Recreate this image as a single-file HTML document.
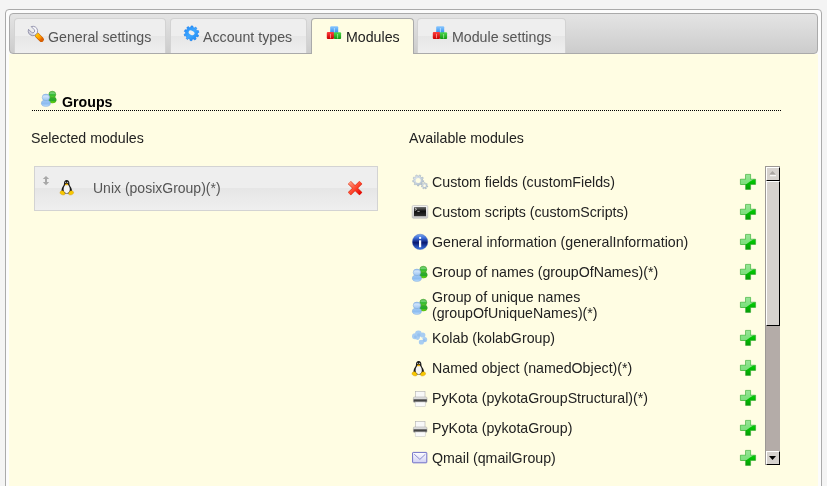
<!DOCTYPE html>
<html><head><meta charset="utf-8"><style>
*{box-sizing:border-box;margin:0;padding:0}
html,body{width:827px;height:486px;overflow:hidden;background:#f4f4f4;font-family:"Liberation Sans",sans-serif;font-size:14.2px}
.abs{position:absolute}
#outer{position:absolute;left:5px;top:9px;width:817px;height:520px;border:1px solid #aaaaaa;border-radius:4px;background:#fcfcfc}
#bar{position:absolute;left:9px;top:13px;width:809px;height:41px;border:1px solid #aaaaaa;border-radius:4px;background:linear-gradient(#e4e4e4,#cccccc)}
#content{position:absolute;left:9px;top:54px;width:809px;height:460px;background:#fffde3}
.tab{position:absolute;top:18px;height:35px;border:1px solid #d3d3d3;border-bottom:0;border-radius:4px 4px 0 0;background:linear-gradient(#eeeeee 0,#eeeeee 50%,#e6e6e6 50%,#efefef 100%)}
.tab.act{border-color:#aaaaaa;background:#fffde3;height:36px}
.t{position:absolute;line-height:16px;white-space:nowrap;will-change:transform}
.tabt{color:#555555}
.act .tabt{color:#212121}
svg.i{position:absolute;overflow:visible;width:16px;height:16px}
#sel{position:absolute;left:34px;top:166px;width:344px;height:45px;border:1px solid #d3d3d3;background:linear-gradient(#eeeeee 0,#eeeeee 50%,#e6e6e6 50%,#efefef 100%)}
.mt{color:#222222}
#sb{position:absolute;left:765px;top:166px;width:15px;height:299px;background:#b4aca8;border-left:1px solid #9c9894;border-top:1px solid #9c9894}
.btn{position:absolute;left:0;width:14px;background:#d6d2ce;border-top:1px solid #fff;border-left:1px solid #fff;border-right:1px solid #000;border-bottom:1px solid #000}
</style></head><body>

<svg width="0" height="0" style="position:absolute">
<defs>
 <linearGradient id="gOr" x1="0" y1="0" x2="1" y2="1"><stop offset="0" stop-color="#ffc000"/><stop offset="0.6" stop-color="#ff9a00"/><stop offset="1" stop-color="#e06000"/></linearGradient>
 <linearGradient id="gSil" x1="1" y1="0" x2="0" y2="1"><stop offset="0" stop-color="#ffffff"/><stop offset="0.5" stop-color="#f0f0f6"/><stop offset="1" stop-color="#b0b0c4"/></linearGradient>
 <linearGradient id="gBlue" x1="0" y1="0" x2="1" y2="1"><stop offset="0" stop-color="#1a88f8"/><stop offset="0.5" stop-color="#40a8ff"/><stop offset="1" stop-color="#1080f0"/></linearGradient>
 <linearGradient id="gCb" x1="0" y1="0" x2="0" y2="1"><stop offset="0" stop-color="#8cc8ff"/><stop offset="1" stop-color="#2a8cf0"/></linearGradient>
 <linearGradient id="gCr" x1="0" y1="0" x2="0" y2="1"><stop offset="0" stop-color="#ff4040"/><stop offset="1" stop-color="#c80000"/></linearGradient>
 <linearGradient id="gCg" x1="0" y1="0" x2="0" y2="1"><stop offset="0" stop-color="#50d850"/><stop offset="1" stop-color="#109810"/></linearGradient>
 <linearGradient id="gPg" x1="0" y1="0" x2="0" y2="1"><stop offset="0" stop-color="#38b038"/><stop offset="0.3" stop-color="#80d880"/><stop offset="0.55" stop-color="#30b830"/><stop offset="1" stop-color="#60d030"/></linearGradient>
 <linearGradient id="gPg2" x1="0" y1="0" x2="0" y2="1"><stop offset="0" stop-color="#30b030"/><stop offset="0.6" stop-color="#28a828"/><stop offset="1" stop-color="#80f000"/></linearGradient>
 <linearGradient id="gPb" x1="0" y1="0" x2="0" y2="1"><stop offset="0" stop-color="#90baf0"/><stop offset="0.3" stop-color="#d0e4fa"/><stop offset="1" stop-color="#98c2f2"/></linearGradient>
 <linearGradient id="gPb2" x1="0" y1="0" x2="0" y2="1"><stop offset="0" stop-color="#a0c8f4"/><stop offset="0.6" stop-color="#8cbcf0"/><stop offset="1" stop-color="#c0e0ff"/></linearGradient>
 <linearGradient id="gX" x1="0" y1="0" x2="1" y2="1"><stop offset="0" stop-color="#ff9a80"/><stop offset="0.5" stop-color="#ff4a30"/><stop offset="1" stop-color="#e80000"/></linearGradient>
 <linearGradient id="gPlus" x1="0" y1="0" x2="1" y2="1"><stop offset="0" stop-color="#b8ecb8"/><stop offset="0.45" stop-color="#70d070"/><stop offset="0.55" stop-color="#00c000"/><stop offset="1" stop-color="#10a010"/></linearGradient>
 <linearGradient id="gPlusB" x1="0" y1="0" x2="0" y2="1"><stop offset="0" stop-color="#30c830"/><stop offset="0.5" stop-color="#00c400"/><stop offset="1" stop-color="#089a08"/></linearGradient>
 <linearGradient id="gGear" x1="0" y1="0" x2="1" y2="1"><stop offset="0" stop-color="#e8eef6"/><stop offset="1" stop-color="#a8b8c8"/></linearGradient>
 <linearGradient id="gInfo" x1="0" y1="0" x2="0" y2="1"><stop offset="0" stop-color="#7aa8f0"/><stop offset="0.25" stop-color="#3a6ad8"/><stop offset="0.55" stop-color="#0a1a70"/><stop offset="1" stop-color="#3c78e8"/></linearGradient>
 <linearGradient id="gTerm" x1="0" y1="0" x2="0" y2="1"><stop offset="0" stop-color="#f4f4f4"/><stop offset="1" stop-color="#c8c8c8"/></linearGradient>
 <linearGradient id="gScr" x1="0" y1="0" x2="0" y2="1"><stop offset="0" stop-color="#707070"/><stop offset="0.45" stop-color="#101010"/><stop offset="1" stop-color="#303030"/></linearGradient>
 <linearGradient id="gEnv" x1="0" y1="0" x2="0" y2="1"><stop offset="0" stop-color="#ffffff"/><stop offset="1" stop-color="#d0d0f4"/></linearGradient>
 <linearGradient id="gPr" x1="0" y1="0" x2="0" y2="1"><stop offset="0" stop-color="#e8e8e8"/><stop offset="0.35" stop-color="#d8d8d8"/><stop offset="0.5" stop-color="#505050"/><stop offset="0.75" stop-color="#404040"/><stop offset="1" stop-color="#b0b0b0"/></linearGradient>

 

 

 

 

 
</defs>
</svg>

<div id="outer"></div><div id="bar"></div><div id="content"></div>
<div class="tab" style="left:14px;width:152px"><span class="t tabt" style="left:33px;top:10px">General settings</span></div>
<div class="tab" style="left:170px;width:137px"><span class="t tabt" style="left:32px;top:10px">Account types</span></div>
<div class="tab act" style="left:311px;width:103px"><span class="t tabt" style="left:34px;top:10px">Modules</span></div>
<div class="tab" style="left:417px;width:149px"><span class="t tabt" style="left:34px;top:10px">Module settings</span></div>
<svg class="i" style="left:28px;top:26px" viewBox="0 0 16 16">
 <line x1="9.2" y1="9.2" x2="13.4" y2="13.4" stroke="#c85a00" stroke-width="5" stroke-linecap="round"/>
 <line x1="9.2" y1="9.2" x2="13.4" y2="13.4" stroke="url(#gOr)" stroke-width="4" stroke-linecap="round"/>
 <path d="M3.2 0.62 L6.24 3.66 A1.9 1.9 0 0 1 3.56 6.34 L0.52 3.3 A4.7 4.7 0 1 0 3.2 0.62Z" fill="url(#gSil)" stroke="#8282a0" stroke-width="0.8" stroke-linejoin="round"/>
</svg>
<svg class="i" style="left:183px;top:25px" viewBox="0 0 16 16">
 <defs><mask id="gm"><rect x="-2" y="-2" width="20" height="20" fill="#fff"/><ellipse cx="8.6" cy="7.8" rx="3.1" ry="2.1" transform="rotate(25 8.6 7.8)" fill="#000"/></mask></defs>
 <path d="M14.38 9.49 L15.67 10.13 L14.94 11.94 L13.57 11.51 L12.56 12.72 L13.22 14.00 L11.57 15.03 L10.71 13.88 L9.18 14.26 L8.97 15.68 L7.03 15.55 L7.01 14.11 L5.55 13.52 L4.54 14.55 L3.05 13.30 L3.88 12.13 L3.04 10.79 L1.62 11.03 L1.15 9.14 L2.51 8.68 L2.62 7.11 L1.33 6.47 L2.06 4.66 L3.43 5.09 L4.44 3.88 L3.78 2.60 L5.43 1.57 L6.29 2.72 L7.82 2.34 L8.03 0.92 L9.97 1.05 L9.99 2.49 L11.45 3.08 L12.46 2.05 L13.95 3.30 L13.12 4.47 L13.96 5.81 L15.38 5.57 L15.85 7.46 L14.49 7.92Z" fill="url(#gBlue)" stroke="#1a80f0" stroke-width="0.6" stroke-linejoin="round" mask="url(#gm)"/>
</svg>
<svg class="i" style="left:325px;top:25px" viewBox="0 0 16 16">
  <rect x="5.2" y="1.2" width="8" height="7" rx="1" fill="url(#gCb)"/>
  <rect x="8.9" y="3" width="0.9" height="4.5" fill="#c8e8ff" opacity="0.8"/>
  <rect x="1.8" y="7" width="7.2" height="7" rx="1" fill="url(#gCr)"/>
  <rect x="5" y="8.8" width="0.9" height="4.5" fill="#ffb0b0" opacity="0.8"/>
  <rect x="8.9" y="7.2" width="7.2" height="6.8" rx="1" fill="url(#gCg)"/>
  <rect x="12.2" y="9" width="0.9" height="4.5" fill="#b0f0b0" opacity="0.8"/>
 </svg>
<svg class="i" style="left:431px;top:25px" viewBox="0 0 16 16">
  <rect x="5.2" y="1.2" width="8" height="7" rx="1" fill="url(#gCb)"/>
  <rect x="8.9" y="3" width="0.9" height="4.5" fill="#c8e8ff" opacity="0.8"/>
  <rect x="1.8" y="7" width="7.2" height="7" rx="1" fill="url(#gCr)"/>
  <rect x="5" y="8.8" width="0.9" height="4.5" fill="#ffb0b0" opacity="0.8"/>
  <rect x="8.9" y="7.2" width="7.2" height="6.8" rx="1" fill="url(#gCg)"/>
  <rect x="12.2" y="9" width="0.9" height="4.5" fill="#b0f0b0" opacity="0.8"/>
 </svg>
<svg class="i" style="left:40px;top:89px" viewBox="0 0 16 16">
  <g stroke="#3a9a20" stroke-width="0.5">
  <ellipse cx="12.3" cy="10.9" rx="4" ry="3.1" fill="url(#gPg2)"/>
  <ellipse cx="12.3" cy="5.4" rx="3.5" ry="3.2" fill="url(#gPg)"/>
  </g>
  <g stroke="#7aa6d8" stroke-width="0.5">
  <ellipse cx="5.9" cy="14.2" rx="4.5" ry="3.2" fill="url(#gPb2)"/>
  <ellipse cx="5.9" cy="8.4" rx="3.7" ry="3.3" fill="url(#gPb)"/>
  </g>
 </svg>
<span class="t" style="left:62px;top:94px;font-weight:bold;color:#000">Groups</span>
<div class="abs" style="left:32px;top:110px;width:749px;height:1px;border-top:1px dotted #000"></div>
<span class="t mt" style="left:31px;top:130px">Selected modules</span>
<span class="t mt" style="left:409px;top:130px">Available modules</span>
<div id="sel"></div>
<svg class="i" style="left:42px;top:175px" viewBox="0 0 16 16">
 <path d="M4 1 L7.2 4 L5 4 L5 7 L7.2 7 L4 10.2 L0.8 7 L3 7 L3 4 L0.8 4Z" fill="#a8a8a8"/>
</svg>
<svg class="i" style="left:58px;top:179px" viewBox="0 0 16 16">
  <path d="M8.7 1 C6.9 1 6 2.4 6 4.2 C6 5.6 5.6 6.4 4.8 7.6 C3.9 9 3.4 10.6 3.6 12.4 L5.4 14.6 L12 14.6 L14 12.2 C14.1 10.4 13.4 8.8 12.4 7.4 C11.6 6.2 11.4 5.4 11.4 4.2 C11.4 2.4 10.5 1 8.7 1Z" fill="#1a1a1a"/>
  <path d="M8.7 5.2 C7 5.2 5.6 7.8 5.6 10.6 C5.6 12.8 6.8 14.2 8.7 14.2 C10.6 14.2 11.8 12.8 11.8 10.6 C11.8 7.8 10.4 5.2 8.7 5.2Z" fill="#f4f4f4"/>
  <ellipse cx="8.6" cy="5.4" rx="1.5" ry="0.9" fill="#f0b000"/><circle cx="7.7" cy="3.3" r="0.6" fill="#ddd"/><circle cx="9.6" cy="3.3" r="0.6" fill="#ddd"/>
  <path d="M2 13.6 C2 12.2 3.6 11.4 4.8 11.8 C6 12.2 6.8 13.6 7 14.8 C7.2 15.8 5.6 16.2 4.2 15.8 C2.8 15.4 2 14.6 2 13.6Z" fill="#f8c800" stroke="#c89000" stroke-width="0.4"/>
  <path d="M15.6 13.6 C15.6 12.2 14 11.4 12.8 11.8 C11.6 12.2 10.6 13.6 10.6 14.8 C10.4 15.8 12 16.2 13.4 15.8 C14.8 15.4 15.6 14.6 15.6 13.6Z" fill="#f8c800" stroke="#c89000" stroke-width="0.4"/>
 </svg>
<svg class="i" style="left:347px;top:180px" viewBox="0 0 16 16">
 <path d="M2.4 2.4 L13.8 13.8 M13.8 2.4 L2.4 13.8" stroke="#d83018" stroke-width="4.2" stroke-linecap="butt"/>
 <path d="M2.4 2.4 L13.8 13.8 M13.8 2.4 L2.4 13.8" stroke="url(#gX)" stroke-width="3.2" stroke-linecap="butt"/>
</svg>
<span class="t" style="left:93px;top:180px;color:#555;font-size:14px">Unix (posixGroup)(*)</span>
<svg class="i" style="left:410px;top:173px" viewBox="0 0 16 16">
 <defs><mask id="ggm"><rect x="-2" y="-2" width="22" height="22" fill="#fff"/><circle cx="8.2" cy="7.4" r="2.5" fill="#000"/><circle cx="14.6" cy="12.8" r="1.2" fill="#000"/></mask></defs>
 <g mask="url(#ggm)">
 <path d="M12.60 7.40 L13.79 7.71 L13.53 9.13 L12.30 8.99 L11.57 10.23 L12.28 11.23 L11.17 12.15 L10.32 11.26 L8.96 11.73 L8.86 12.96 L7.42 12.95 L7.35 11.72 L6.00 11.21 L5.13 12.09 L4.04 11.15 L4.77 10.16 L4.07 8.90 L2.84 9.02 L2.60 7.60 L3.80 7.31 L4.07 5.90 L3.05 5.19 L3.79 3.95 L4.89 4.50 L6.00 3.59 L5.68 2.40 L7.04 1.92 L7.53 3.05 L8.96 3.07 L9.48 1.95 L10.83 2.46 L10.48 3.64 L11.57 4.57 L12.68 4.05 L13.39 5.30 L12.37 5.98Z" fill="url(#gGear)" stroke="#9aaabb" stroke-width="0.5"/>
 <path d="M16.90 12.80 L17.79 13.03 L17.54 14.06 L16.64 13.85 L16.03 14.60 L16.41 15.44 L15.45 15.88 L15.05 15.06 L14.09 15.04 L13.67 15.86 L12.72 15.39 L13.12 14.56 L12.53 13.80 L11.62 13.98 L11.40 12.94 L12.30 12.74 L12.53 11.80 L11.82 11.21 L12.49 10.39 L13.21 10.96 L14.09 10.56 L14.11 9.64 L15.17 9.65 L15.17 10.57 L16.03 11.00 L16.77 10.45 L17.42 11.28 L16.70 11.86Z" fill="url(#gGear)" stroke="#9aaabb" stroke-width="0.5"/>
 </g>
</svg>
<svg class="i" style="left:740px;top:174px" viewBox="0 0 16 16">
  <path d="M5.6 0.4 H10.6 V5.2 H15.6 V10.4 H10.6 V15.4 H5.6 V10.4 H0.4 V5.2 H5.6Z" fill="url(#gPlusB)" stroke="#30a830" stroke-width="0.6" stroke-linejoin="round"/>
  <path d="M5.9 0.7 H10.3 V5.5 H13.4 C11 6.6 9 8 6.6 10.1 H0.7 V5.5 H5.9Z" fill="#ffffff" opacity="0.5"/>
 </svg>
<span class="t mt" style="left:432px;top:174px">Custom fields (customFields)</span>
<svg class="i" style="left:411px;top:204px" viewBox="0 0 16 16">
 <rect x="1.2" y="1.5" width="15.6" height="12.8" rx="1.2" fill="url(#gTerm)" stroke="#b8b8b8" stroke-width="0.6"/>
 <rect x="3" y="3" width="12" height="9.2" fill="url(#gScr)"/>
 <path d="M3.8 3.8 L5.6 5.2 L3.8 6.6" stroke="#e8e8e8" stroke-width="0.8" fill="none"/>
 <path d="M6.4 7.4 H8.6" stroke="#c0c0c0" stroke-width="0.9"/>
</svg>
<svg class="i" style="left:740px;top:204px" viewBox="0 0 16 16">
  <path d="M5.6 0.4 H10.6 V5.2 H15.6 V10.4 H10.6 V15.4 H5.6 V10.4 H0.4 V5.2 H5.6Z" fill="url(#gPlusB)" stroke="#30a830" stroke-width="0.6" stroke-linejoin="round"/>
  <path d="M5.9 0.7 H10.3 V5.5 H13.4 C11 6.6 9 8 6.6 10.1 H0.7 V5.5 H5.9Z" fill="#ffffff" opacity="0.5"/>
 </svg>
<span class="t mt" style="left:432px;top:204px">Custom scripts (customScripts)</span>
<svg class="i" style="left:412px;top:234px" viewBox="0 0 16 16">
 <circle cx="8.1" cy="7.9" r="7.7" fill="url(#gInfo)" stroke="#2a50b0" stroke-width="0.4"/>
 <circle cx="8.1" cy="3.9" r="1.15" fill="#fff"/>
 <rect x="7" y="6.3" width="2.2" height="7" fill="#fff"/>
</svg>
<svg class="i" style="left:740px;top:234px" viewBox="0 0 16 16">
  <path d="M5.6 0.4 H10.6 V5.2 H15.6 V10.4 H10.6 V15.4 H5.6 V10.4 H0.4 V5.2 H5.6Z" fill="url(#gPlusB)" stroke="#30a830" stroke-width="0.6" stroke-linejoin="round"/>
  <path d="M5.9 0.7 H10.3 V5.5 H13.4 C11 6.6 9 8 6.6 10.1 H0.7 V5.5 H5.9Z" fill="#ffffff" opacity="0.5"/>
 </svg>
<span class="t mt" style="left:432px;top:234px">General information (generalInformation)</span>
<svg class="i" style="left:411px;top:264px" viewBox="0 0 16 16">
  <g stroke="#3a9a20" stroke-width="0.5">
  <ellipse cx="12.3" cy="10.9" rx="4" ry="3.1" fill="url(#gPg2)"/>
  <ellipse cx="12.3" cy="5.4" rx="3.5" ry="3.2" fill="url(#gPg)"/>
  </g>
  <g stroke="#7aa6d8" stroke-width="0.5">
  <ellipse cx="5.9" cy="14.2" rx="4.5" ry="3.2" fill="url(#gPb2)"/>
  <ellipse cx="5.9" cy="8.4" rx="3.7" ry="3.3" fill="url(#gPb)"/>
  </g>
 </svg>
<svg class="i" style="left:740px;top:264px" viewBox="0 0 16 16">
  <path d="M5.6 0.4 H10.6 V5.2 H15.6 V10.4 H10.6 V15.4 H5.6 V10.4 H0.4 V5.2 H5.6Z" fill="url(#gPlusB)" stroke="#30a830" stroke-width="0.6" stroke-linejoin="round"/>
  <path d="M5.9 0.7 H10.3 V5.5 H13.4 C11 6.6 9 8 6.6 10.1 H0.7 V5.5 H5.9Z" fill="#ffffff" opacity="0.5"/>
 </svg>
<span class="t mt" style="left:432px;top:264px">Group of names (groupOfNames)(*)</span>
<svg class="i" style="left:411px;top:297px" viewBox="0 0 16 16">
  <g stroke="#3a9a20" stroke-width="0.5">
  <ellipse cx="12.3" cy="10.9" rx="4" ry="3.1" fill="url(#gPg2)"/>
  <ellipse cx="12.3" cy="5.4" rx="3.5" ry="3.2" fill="url(#gPg)"/>
  </g>
  <g stroke="#7aa6d8" stroke-width="0.5">
  <ellipse cx="5.9" cy="14.2" rx="4.5" ry="3.2" fill="url(#gPb2)"/>
  <ellipse cx="5.9" cy="8.4" rx="3.7" ry="3.3" fill="url(#gPb)"/>
  </g>
 </svg>
<svg class="i" style="left:740px;top:297px" viewBox="0 0 16 16">
  <path d="M5.6 0.4 H10.6 V5.2 H15.6 V10.4 H10.6 V15.4 H5.6 V10.4 H0.4 V5.2 H5.6Z" fill="url(#gPlusB)" stroke="#30a830" stroke-width="0.6" stroke-linejoin="round"/>
  <path d="M5.9 0.7 H10.3 V5.5 H13.4 C11 6.6 9 8 6.6 10.1 H0.7 V5.5 H5.9Z" fill="#ffffff" opacity="0.5"/>
 </svg>
<span class="t mt" style="left:432px;top:289px">Group of unique names</span>
<span class="t mt" style="left:432px;top:305px">(groupOfUniqueNames)(*)</span>
<svg class="i" style="left:411px;top:329px" viewBox="0 0 16 16">
 <g fill="#a8cdf2">
 <circle cx="7.4" cy="4.8" r="3.4"/><circle cx="4" cy="7.2" r="3"/><circle cx="11.8" cy="6" r="2.6"/>
 <circle cx="13.6" cy="10.6" r="2.6"/><circle cx="10.4" cy="13" r="2.6"/><circle cx="6.6" cy="8.6" r="2.4"/>
 </g>
 <path d="M8.2 10.6 Q10 9.6 11.8 10.4" stroke="#fffde3" stroke-width="1.2" fill="none"/>
 <g fill="#90bdee" opacity="0.7"><circle cx="7.8" cy="6" r="1.8"/><circle cx="13.2" cy="11.4" r="1.4"/><circle cx="4.4" cy="8" r="1.4"/></g>
</svg>
<svg class="i" style="left:740px;top:330px" viewBox="0 0 16 16">
  <path d="M5.6 0.4 H10.6 V5.2 H15.6 V10.4 H10.6 V15.4 H5.6 V10.4 H0.4 V5.2 H5.6Z" fill="url(#gPlusB)" stroke="#30a830" stroke-width="0.6" stroke-linejoin="round"/>
  <path d="M5.9 0.7 H10.3 V5.5 H13.4 C11 6.6 9 8 6.6 10.1 H0.7 V5.5 H5.9Z" fill="#ffffff" opacity="0.5"/>
 </svg>
<span class="t mt" style="left:432px;top:330px">Kolab (kolabGroup)</span>
<svg class="i" style="left:410px;top:360px" viewBox="0 0 16 16">
  <path d="M8.7 1 C6.9 1 6 2.4 6 4.2 C6 5.6 5.6 6.4 4.8 7.6 C3.9 9 3.4 10.6 3.6 12.4 L5.4 14.6 L12 14.6 L14 12.2 C14.1 10.4 13.4 8.8 12.4 7.4 C11.6 6.2 11.4 5.4 11.4 4.2 C11.4 2.4 10.5 1 8.7 1Z" fill="#1a1a1a"/>
  <path d="M8.7 5.2 C7 5.2 5.6 7.8 5.6 10.6 C5.6 12.8 6.8 14.2 8.7 14.2 C10.6 14.2 11.8 12.8 11.8 10.6 C11.8 7.8 10.4 5.2 8.7 5.2Z" fill="#f4f4f4"/>
  <ellipse cx="8.6" cy="5.4" rx="1.5" ry="0.9" fill="#f0b000"/><circle cx="7.7" cy="3.3" r="0.6" fill="#ddd"/><circle cx="9.6" cy="3.3" r="0.6" fill="#ddd"/>
  <path d="M2 13.6 C2 12.2 3.6 11.4 4.8 11.8 C6 12.2 6.8 13.6 7 14.8 C7.2 15.8 5.6 16.2 4.2 15.8 C2.8 15.4 2 14.6 2 13.6Z" fill="#f8c800" stroke="#c89000" stroke-width="0.4"/>
  <path d="M15.6 13.6 C15.6 12.2 14 11.4 12.8 11.8 C11.6 12.2 10.6 13.6 10.6 14.8 C10.4 15.8 12 16.2 13.4 15.8 C14.8 15.4 15.6 14.6 15.6 13.6Z" fill="#f8c800" stroke="#c89000" stroke-width="0.4"/>
 </svg>
<svg class="i" style="left:740px;top:360px" viewBox="0 0 16 16">
  <path d="M5.6 0.4 H10.6 V5.2 H15.6 V10.4 H10.6 V15.4 H5.6 V10.4 H0.4 V5.2 H5.6Z" fill="url(#gPlusB)" stroke="#30a830" stroke-width="0.6" stroke-linejoin="round"/>
  <path d="M5.9 0.7 H10.3 V5.5 H13.4 C11 6.6 9 8 6.6 10.1 H0.7 V5.5 H5.9Z" fill="#ffffff" opacity="0.5"/>
 </svg>
<span class="t mt" style="left:432px;top:360px">Named object (namedObject)(*)</span>
<svg class="i" style="left:411px;top:390px" viewBox="0 0 16 16">
  <rect x="4.4" y="1.4" width="9.6" height="6" fill="#f8f8f8" stroke="#b0b0b0" stroke-width="0.6"/>
  <rect x="2.4" y="7" width="13.6" height="5.4" rx="1" fill="url(#gPr)" stroke="#a0a0a0" stroke-width="0.5"/>
  <rect x="4.2" y="12" width="10" height="4.4" fill="#fafafa" stroke="#c0c0c0" stroke-width="0.5"/>
 </svg>
<svg class="i" style="left:740px;top:390px" viewBox="0 0 16 16">
  <path d="M5.6 0.4 H10.6 V5.2 H15.6 V10.4 H10.6 V15.4 H5.6 V10.4 H0.4 V5.2 H5.6Z" fill="url(#gPlusB)" stroke="#30a830" stroke-width="0.6" stroke-linejoin="round"/>
  <path d="M5.9 0.7 H10.3 V5.5 H13.4 C11 6.6 9 8 6.6 10.1 H0.7 V5.5 H5.9Z" fill="#ffffff" opacity="0.5"/>
 </svg>
<span class="t mt" style="left:432px;top:390px">PyKota (pykotaGroupStructural)(*)</span>
<svg class="i" style="left:411px;top:420px" viewBox="0 0 16 16">
  <rect x="4.4" y="1.4" width="9.6" height="6" fill="#f8f8f8" stroke="#b0b0b0" stroke-width="0.6"/>
  <rect x="2.4" y="7" width="13.6" height="5.4" rx="1" fill="url(#gPr)" stroke="#a0a0a0" stroke-width="0.5"/>
  <rect x="4.2" y="12" width="10" height="4.4" fill="#fafafa" stroke="#c0c0c0" stroke-width="0.5"/>
 </svg>
<svg class="i" style="left:740px;top:420px" viewBox="0 0 16 16">
  <path d="M5.6 0.4 H10.6 V5.2 H15.6 V10.4 H10.6 V15.4 H5.6 V10.4 H0.4 V5.2 H5.6Z" fill="url(#gPlusB)" stroke="#30a830" stroke-width="0.6" stroke-linejoin="round"/>
  <path d="M5.9 0.7 H10.3 V5.5 H13.4 C11 6.6 9 8 6.6 10.1 H0.7 V5.5 H5.9Z" fill="#ffffff" opacity="0.5"/>
 </svg>
<span class="t mt" style="left:432px;top:420px">PyKota (pykotaGroup)</span>
<svg class="i" style="left:411px;top:451px" viewBox="0 0 16 16">
 <rect x="1.6" y="1.4" width="14.2" height="10.4" rx="0.6" fill="url(#gEnv)" stroke="#7070c8" stroke-width="1"/>
 <path d="M3.2 3.2 L8.9 8.4 L14.4 3.2" stroke="#8080c8" stroke-width="0.9" fill="none"/>
</svg>
<svg class="i" style="left:740px;top:450px" viewBox="0 0 16 16">
  <path d="M5.6 0.4 H10.6 V5.2 H15.6 V10.4 H10.6 V15.4 H5.6 V10.4 H0.4 V5.2 H5.6Z" fill="url(#gPlusB)" stroke="#30a830" stroke-width="0.6" stroke-linejoin="round"/>
  <path d="M5.9 0.7 H10.3 V5.5 H13.4 C11 6.6 9 8 6.6 10.1 H0.7 V5.5 H5.9Z" fill="#ffffff" opacity="0.5"/>
 </svg>
<span class="t mt" style="left:432px;top:450px">Qmail (qmailGroup)</span>
<div id="sb"><div class="btn" style="top:0;height:14px"></div><div class="btn" style="top:14px;height:145px"></div><div class="btn" style="top:284px;height:14px"></div></div>
<svg style="position:absolute;left:765px;top:166px;width:15px;height:299px" viewBox="0 0 15 299">
 <path d="M4.3 8.6 L7.5 5 L10.7 8.6Z" fill="#a8a4a0"/>
 <rect x="5" y="9.2" width="6" height="1" fill="#ffffff"/>
 <path d="M4 290 L11 290 L7.5 294Z" fill="#000000"/>
</svg>
</body></html>
